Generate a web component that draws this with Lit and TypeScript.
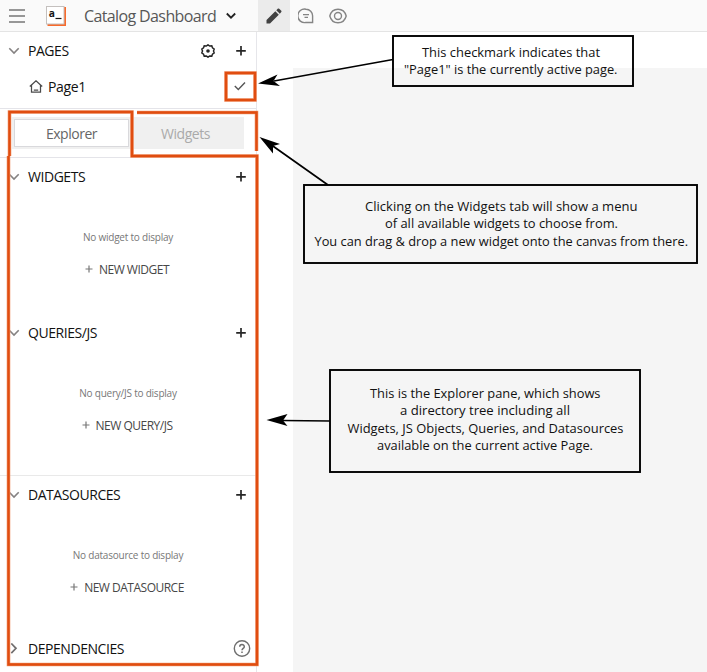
import { LitElement, html, svg, css } from "lit";
import { customElement } from "lit/decorators.js";

const chevron = html`<svg class="chev" width="12" height="8" viewBox="0 0 12 8"><path d="M1.3 1.3 6 6 10.700 1.300" fill="none" stroke="#858282" stroke-width="1.6"/></svg>`;
const chevronRight = html`<svg class="chev" width="12" height="12" viewBox="0 0 12 12"><path d="M3.300 .5 8 5.300 3.300 10.100" fill="none" stroke="#716e6e" stroke-width="1.7"/></svg>`;
const plus = html`<svg class="plus" width="12" height="12" viewBox="0 0 12 12"><path d="M6 1V10.600M1.200 5.800H10.800" stroke="#262626" stroke-width="1.700"/></svg>`;
const smallPlus = html`<svg width="8" height="8" viewBox="0 0 8 8"><path d="M4 .5V7.500M.5 4H7.500" stroke="#777" stroke-width="1.200"/></svg>`;

interface Section { title: string; cls: string; empty: string; action: string; }
const sections: Section[] = [
  { title: "WIDGETS", cls: "widgets", empty: "No widget to display", action: "NEW WIDGET" },
  { title: "QUERIES/JS", cls: "queries", empty: "No query/JS to display", action: "NEW QUERY/JS" },
  { title: "DATASOURCES", cls: "datasources", empty: "No datasource to display", action: "NEW DATASOURCE" },
];

interface Line { x: number; y: number; w: number; text: string; }
const notes: { x: number; y: number; w: number; h: number; lines: Line[] }[] = [
  { x: 393, y: 36, w: 240, h: 50, lines: [
    { x: 422, y: 57, w: 178, text: "This checkmark indicates that" },
    { x: 404, y: 74, w: 213.500, text: "\"Page1\" is the currently active page." } ] },
  { x: 304, y: 185, w: 393, h: 78, lines: [
    { x: 365, y: 211, w: 272.500, text: "Clicking on the Widgets tab will show a menu" },
    { x: 385, y: 228, w: 233, text: "of all available widgets to choose from." },
    { x: 314.500, y: 245.500, w: 373.500, text: "You can drag & drop a new widget onto the canvas from there." } ] },
  { x: 330, y: 370, w: 310, h: 102, lines: [
    { x: 370, y: 398, w: 230.500, text: "This is the Explorer pane, which shows" },
    { x: 400, y: 415, w: 170, text: "a directory tree including all" },
    { x: 347.500, y: 432.500, w: 276, text: "Widgets, JS Objects, Queries, and Datasources" },
    { x: 377, y: 449.500, w: 216, text: "available on the current active Page." } ] },
];

@customElement("app-root")
export class AppRoot extends LitElement {
  static styles = css`
    :host { display: block; position: relative; width: 707px; height: 672px; overflow: hidden; background: #fff; font-family: "Open Sans", "Noto Sans", sans-serif; color: #111; }
    * { box-sizing: border-box; }
    svg { display: block; flex: none; }
    .header { height: 32px; display: flex; align-items: center; background: #fafafa; border-bottom: 1px solid #e4e4e4; }
    .burger { margin-left: 9px; }
    .logo { margin-left: 21px; }
    .name { margin-left: 18px; width: 132px; font-size: 16px; line-height: 30px; letter-spacing: -.62px; color: #575757; white-space: nowrap; }
    .caret { margin-left: 9px; }
    .mode { width: 32px; height: 31px; display: grid; place-items: center; }
    .mode.on { background: #ebebeb; margin-left: 21px; }
    .body { display: flex; height: 640px; }
    .side { width: 257px; border-right: 1px solid #e6e6ea; display: flex; flex-direction: column; }
    .canvas { flex: 1; margin: 36px 0 0 36px; background: #f5f5f5; }
    .pages { height: 77px; border-bottom: 1px solid #e4e4e9; }
    .row { display: flex; align-items: center; height: 38px; padding: 0 9px 0 8px; font-size: 14px; line-height: 20px; }
    .title { flex: 1; margin-left: 8px; letter-spacing: -.45px; white-space: nowrap; }
    .gear { margin-right: 20px; }
    .page { height: 34px; padding-left: 29px; }
    .page .title { margin-left: 5px; letter-spacing: -.35px; }
    .tabs { height: 49px; padding: 8px 12px; border-bottom: 1px solid #e4e4e9; }
    .track { height: 32px; display: flex; padding: 2px; background: #f0f0f0; font-size: 14px; letter-spacing: -.47px; color: #aaa; }
    .tab { flex: 1; display: grid; place-items: center; padding-top: 1px; }
    .tab.on { background: #fff; border: 1px solid #d9d9dc; color: #666; height: 28px; }
    .section .row { height: 38px; }
    .widgets { height: 156px; }
    .queries { height: 162px; border-bottom: 1px solid #e9e9e9; }
    .datasources { height: 154px; }
    .empty { height: 42px; padding-top: 20px; text-align: center; font-size: 10px; line-height: 14px; color: #777; letter-spacing: -.22px; margin-top: 14px; }
    .action { display: flex; justify-content: center; align-items: center; gap: 6px; height: 36px; margin-top: -1px; padding-right: 2px; font-size: 12px; color: #474747; letter-spacing: -.5px; }
    .help { padding-right: 5px; }
    .overlay { position: absolute; left: 0; top: 0; }
    .note { font-family: "Open Sans", "Noto Sans", sans-serif; font-size: 13.300px; fill: #111; }
  `;

  render() {
    return html`
      <div class="header">
        <svg class="burger" width="16" height="16" viewBox="0 0 16 16"><path d="M0 2H16M0 8H16M0 14H16" stroke="#777" stroke-width="1.600"/></svg>
        <svg class="logo" width="20" height="20" viewBox="0 0 20 20">
          <path d="M1.500 1H20V20H1.500Z" fill="#f86a2b"/>
          <rect x=".5" y=".5" width="17.500" height="17.500" fill="#fff" stroke="#c4c0be"/>
          <text x="2.800" y="11" font-family="DejaVu Sans Mono" font-weight="700" font-size="10" fill="#151515">a</text>
          <path d="M9.500 12.500H15.500" stroke="#151515" stroke-width="1.200"/>
        </svg>
        <div class="name">Catalog Dashboard</div>
        <svg class="caret" width="12" height="8" viewBox="0 0 12 8"><path d="M1.800 1.500 6 5.700 10.200 1.500" fill="none" stroke="#222" stroke-width="1.800"/></svg>
        <div class="mode on"><svg width="16" height="16" viewBox="0 0 16 16"><path d="M.5 15.500V12L9.300 3.200 12.800 6.700 4 15.500ZM10.300 2.200 12 .6Q12.600.2 13.200.7L15.300 2.800Q15.800 3.400 15.300 4L13.800 5.700Z" fill="#424242"/></svg></div>
        <div class="mode"><svg width="16" height="16" viewBox="0 0 16 16"><path d="M8 1.200H8A6.800 6.800 0 1 0 8 14.500H14.600V8A6.600 6.600 0 0 0 8 1.200ZM5 6.600H11M6.500 9.400H10" fill="none" stroke="#858585" stroke-width="1.400"/></svg></div>
        <div class="mode"><svg width="18" height="16" viewBox="0 0 18 16"><path d="M.8 8C2 3.400 5 1.200 9 1.200S16 3.400 17.200 8C16 12.600 13 14.800 9 14.800S2 12.600.8 8Z" fill="none" stroke="#858585" stroke-width="1.400"/><circle cx="9" cy="8" r="3.500" fill="none" stroke="#858585" stroke-width="1.400"/></svg></div>
      </div>
      <div class="body">
        <div class="side">
          <div class="pages">
            <div class="row">${chevron}<div class="title">PAGES</div>
              <svg class="gear" width="14" height="14" viewBox="0 0 14 14"><path d="M7 .8 8.700 2 10.800 1.900 11.500 3.900 13.200 5.100 12.500 7 13.200 8.900 11.500 10.100 10.800 12.100 8.700 12 7 13.200 5.300 12 3.200 12.100 2.500 10.100.8 8.900 1.500 7 .8 5.100 2.500 3.900 3.200 1.900 5.300 2Z" fill="none" stroke="#262626" stroke-width="1.500"/><circle cx="7" cy="7" r="1.800" fill="#262626"/></svg>${plus}</div>
            <div class="row page"><svg width="14" height="14" viewBox="0 0 14 14"><path d="M.8 6.500 7 .8 13.200 6.500M2.500 5.300V12H11.500V5.300M4.800 10H9.200" fill="none" stroke="#4b4b4b" stroke-width="1.250"/></svg><div class="title">Page1</div>
              <svg width="14" height="12" viewBox="0 0 14 12"><path d="M1.800 5 5.300 8.500 12 1.600" fill="none" stroke="#555" stroke-width="1.400"/></svg></div>
          </div>
          <div class="tabs"><div class="track"><div class="tab on">Explorer</div><div class="tab">Widgets</div></div></div>
          ${sections.map(s => html`<div class="section ${s.cls}">
            <div class="row">${chevron}<div class="title">${s.title}</div>${plus}</div>
            <div class="empty">${s.empty}</div>
            <div class="action">${smallPlus}<span>${s.action}</span></div>
          </div>`)}
          <div class="row help">${chevronRight}<div class="title">DEPENDENCIES</div>
            <svg width="18" height="18" viewBox="0 0 18 18"><circle cx="9" cy="8.500" r="7.700" fill="none" stroke="#6f6f6f" stroke-width="1.400"/><path d="M6.700 6.800C6.700 3.800 11.300 3.800 11.300 6.700 11.300 8.400 9 8.400 9 10.200M9 11.400V12.900" fill="none" stroke="#6f6f6f" stroke-width="1.500"/></svg></div>
        </div>
        <div class="canvas"></div>
      </div>
      <svg class="overlay" width="707" height="672" viewBox="0 0 707 672">
        <g fill="none" stroke="#f29a72" stroke-width="3.600">
          <rect x="226" y="73" width="29" height="27"/>
          <path d="M9.500 156V112H132V156H257V664.500H8.500V156M137 112.500H256.500V151"/>
        </g>
        <g fill="none" stroke="#e04d10" stroke-width="2.400">
          <rect x="226" y="73" width="29" height="27"/>
          <path d="M9.500 156V112H132V156H257V664.500H8.500V156M137 112.500H256.500V151"/>
        </g>
        <g stroke="#000" stroke-width="1.700">
          <path d="M393 59.500 274 81M328 185 270 144M330 421 282 420.500"/>
        </g>
        <path d="M258 83.500 277.500 74.500 273.500 81 280 86ZM259.500 137 280 144 273 146 273 153.500ZM266.500 420 287.500 414 283 420.500 287.500 426Z" fill="#000"/>
        ${notes.map(n => svg`
          <rect x=${n.x} y=${n.y} width=${n.w} height=${n.h} fill=${n.y < 50 ? "none" : "#f5f5f5"} stroke="#000" stroke-width="1.900"/>
          ${n.lines.map(l => svg`<text class="note" x=${l.x} y=${l.y} textLength=${l.w} lengthAdjust="spacingAndGlyphs">${l.text}</text>`)}`)}
      </svg>`;
  }
}
